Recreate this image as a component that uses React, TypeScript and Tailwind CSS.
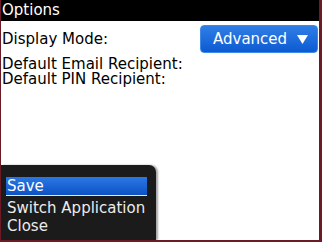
export default function App() {
  return (
    <div className="relative w-[322px] h-[242px] overflow-hidden bg-white border-l border-r-[3px] border-b-2 border-[#6e1a26] font-['DejaVu_Sans',sans-serif] text-black">
      {/* Title bar */}
      <div className="h-[21px] bg-black text-white text-[15px] leading-[21px] pl-[1px]">
        Options
      </div>

      {/* Display mode row */}
      <div className="flex items-center justify-between mt-[4px] pl-[1px] pr-[1px]">
        <span className="text-[15px] leading-[18px]">Display Mode:</span>
        <button className="flex items-center gap-[10px] h-[28px] w-[118px] pl-[12px] rounded-[4px] border border-[#3f8ae6] bg-gradient-to-b from-[#2f7ee6] to-[#0b5ad2] text-white text-[15px] leading-[18px]">
          Advanced
          <svg width="11" height="9" viewBox="0 0 11 9">
            <path d="M0 0 H11 L5.5 9 Z" fill="#fff" />
          </svg>
        </button>
      </div>

      <div className="mt-[4px] pl-[1px] text-[15px] leading-[15px]">
        <div>Default Email Recipient:</div>
        <div>Default PIN Recipient:</div>
      </div>

      {/* Menu overlay */}
      <div className="absolute left-0 bottom-0 w-[155px] h-[75px] bg-[#1b1b1b] rounded-tr-[7px] shadow-[2px_0_2px_rgba(0,0,0,0.35)] text-[#ececec] text-[15px] leading-[18px] pt-[12px] pl-[5px]">
        <div className="w-[141px] h-[18px] pl-[1px] bg-gradient-to-b from-[#2a78e4] to-[#0c52c4] text-white">
          Save
        </div>
        <div className="w-[141px] h-px bg-[#dfe8f5]" />
        <div className="mt-[3px] pl-[1px]">Switch Application</div>
        <div className="pl-[1px]">Close</div>
      </div>
    </div>
  );
}
